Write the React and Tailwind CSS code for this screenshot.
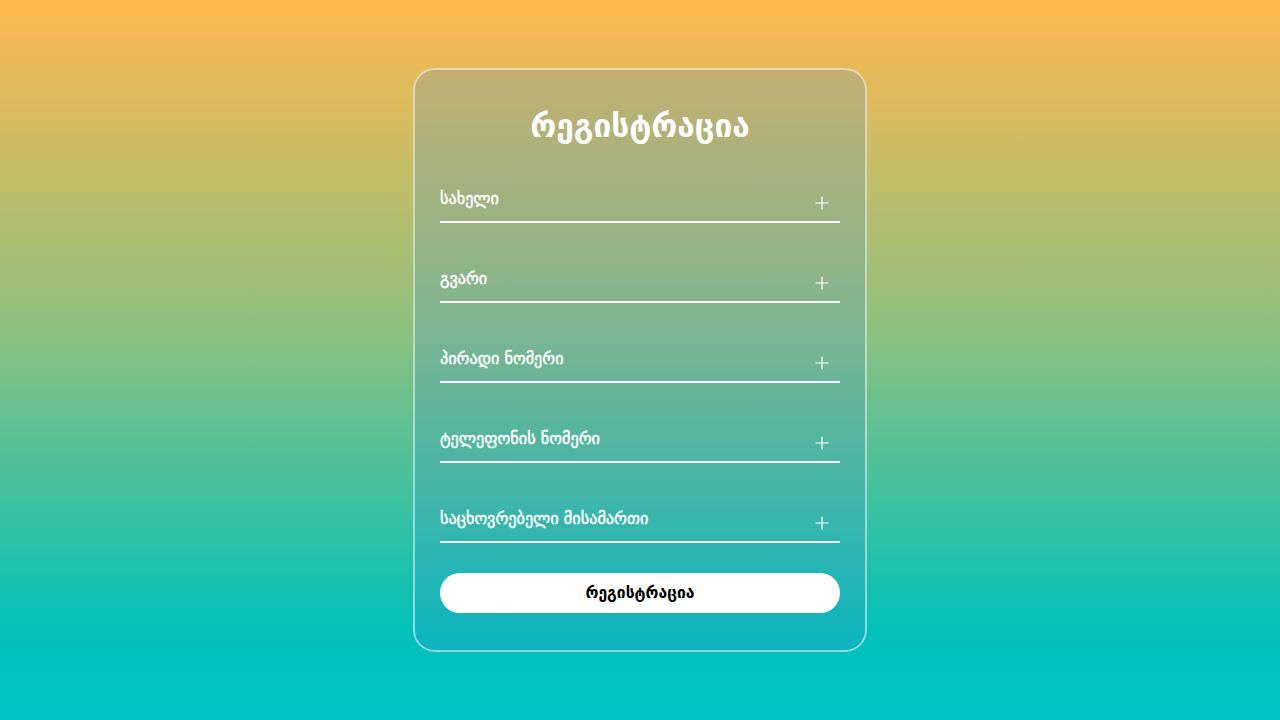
import React from 'react';

const fields = [
  "სახელი",
  "გვარი",
  "პირადი ნომერი",
  "ტელეფონის ნომერი",
  "საცხოვრებელი მისამართი",
];

function Plus() {
  return (
    <svg width="14" height="14" viewBox="0 0 14 14" className="mb-[1px] mr-[11px]">
      <path d="M7 0.5V13.5M0.5 7H13.5" stroke="white" strokeWidth="1.2" />
    </svg>
  );
}

export default function App() {
  return (
    <div
      className="w-full h-[720px] flex justify-center pt-[68px] bg-[linear-gradient(to_bottom,#ffb84d_0%,#8fc07e_45%,#00c1b9_88%,#00c2c3_100%)]"
      style={{ fontFamily: '"DejaVu Sans", "Noto Sans", sans-serif' }}
    >
      <div className="w-[454px] h-[584px] rounded-[22px] border-2 border-white/50 bg-[rgba(70,140,205,0.22)] px-[25px] pt-[36px]">
        <h1 className="text-center text-white font-bold text-[31.6px] leading-[40px]">
          რეგისტრაცია
        </h1>
        <form className="mt-[27px] flex flex-col gap-[30px]" onSubmit={(e) => e.preventDefault()}>
          {fields.map((label) => (
            <div
              key={label}
              className="h-[50px] border-b-2 border-white flex items-end justify-between pb-[10px]"
            >
              <span className="text-white text-[16.2px] leading-[24px] [-webkit-text-stroke:0.45px_white]">
                {label}
              </span>
              <Plus />
            </div>
          ))}
          <button
            type="submit"
            className="h-[40px] w-full rounded-full bg-white text-black font-bold text-[15.7px]"
          >
            რეგისტრაცია
          </button>
        </form>
      </div>
    </div>
  );
}
